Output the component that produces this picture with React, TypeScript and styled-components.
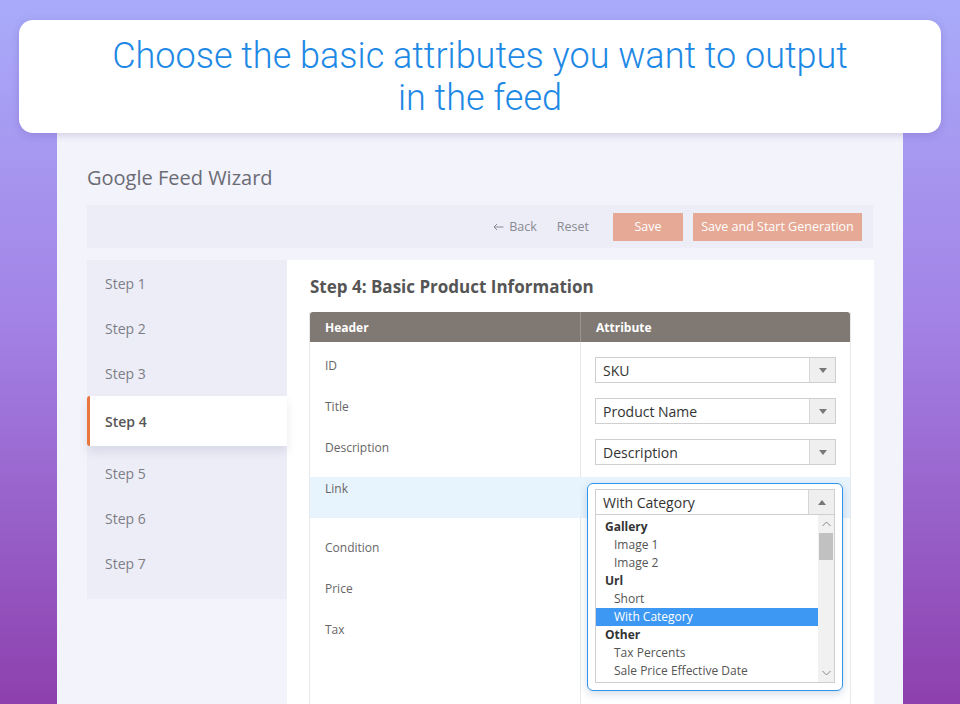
import React from 'react';
import styled, { createGlobalStyle } from 'styled-components';

const GlobalStyle = createGlobalStyle`
  html, body {
    margin: 0;
    padding: 0;
  }
  body {
    width: 960px;
    height: 704px;
    overflow: hidden;
    font-family: "Open Sans", "Noto Sans", sans-serif;
    background: linear-gradient(180deg, #a9abfa 0%, #a383e6 45%, #8d40ae 100%);
  }
`;

const Page = styled.div`
  position: relative;
  width: 960px;
  height: 704px;
  overflow: hidden;
`;

const Banner = styled.div`
  position: absolute;
  z-index: 2;
  left: 19px;
  top: 20px;
  width: 922px;
  height: 113px;
  box-sizing: border-box;
  padding-top: 15px;
  background: #fff;
  border-radius: 14px;
  box-shadow: 0 2px 8px rgba(60, 40, 120, 0.18);
  text-align: center;
  font-family: Roboto, "Liberation Sans", sans-serif;
  font-weight: 300;
  font-size: 36px;
  line-height: 42px;
  color: #1e88e5;
`;

const Panel = styled.div`
  margin: 133px 0 0 57px;
  width: 846px;
  height: 600px;
  box-sizing: border-box;
  padding: 30px 30px 0;
  background: #f2f3fb;
  display: flex;
  flex-direction: column;
`;

const Heading = styled.h1`
  margin: 0;
  font-size: 20px;
  font-weight: 400;
  color: #6b6b74;
  line-height: 30px;
`;

const Toolbar = styled.div`
  margin-top: 12px;
  height: 43px;
  background: #ecedf7;
  display: flex;
  align-items: center;
  justify-content: flex-end;
  padding-right: 11px;
`;

const LinkButton = styled.span<{ $gap?: number }>`
  font-size: 12.5px;
  color: #8a8a92;
  margin-right: ${p => p.$gap ?? 0}px;
  display: flex;
  align-items: center;
  gap: 5px;
`;

const SaveButton = styled.span<{ $wide?: boolean }>`
  height: 28px;
  box-sizing: border-box;
  width: ${p => (p.$wide ? '169px' : '70px')};
  justify-content: center;
  background: #e6a995;
  color: #fff;
  font-size: 12.5px;
  display: flex;
  align-items: center;
  margin-left: ${p => (p.$wide ? '10px' : '0')};
`;

const Body = styled.div`
  margin-top: 12px;
  display: flex;
  align-items: flex-start;
  flex: 1;
`;

const Sidebar = styled.ul`
  list-style: none;
  margin: 0;
  padding: 1px 0 13px;
  width: 200px;
  flex-shrink: 0;
  box-sizing: border-box;
  background: #ecedf6;
`;

const StepItem = styled.li<{ $active?: boolean }>`
  position: relative;
  height: ${p => (p.$active ? '50px' : '45px')};
  margin: ${p => (p.$active ? '0 0 5px' : '0')};
  display: flex;
  align-items: center;
  padding-left: 15px;
  font-size: 14px;
  color: ${p => (p.$active ? '#555' : '#7d7d86')};
  font-weight: ${p => (p.$active ? 600 : 400)};
  background: ${p => (p.$active ? '#fff' : 'transparent')};
  border-left: 3px solid ${p => (p.$active ? '#e8743e' : 'transparent')};
  border-radius: ${p => (p.$active ? '3px 0 0 3px' : '0')};
  box-shadow: ${p => (p.$active ? '0 6px 10px rgba(80, 80, 130, 0.12)' : 'none')};
  z-index: ${p => (p.$active ? 1 : 0)};
`;

const Content = styled.div`
  flex: 1;
  align-self: stretch;
  background: #fff;
  padding: 14px 23px 0;
`;

const Title = styled.h2`
  margin: 0 0 12px;
  font-size: 17px;
  font-weight: 700;
  color: #555;
  line-height: 26px;
`;

const Table = styled.div`
  position: relative;
  margin-left: -1px;
  width: 540px;
  height: 420px;
  border-left: 1px solid #e8e8e8;
  border-right: 1px solid #e8e8e8;
  display: grid;
  grid-template-columns: 270px 1fr;
  grid-auto-rows: min-content;
  background: linear-gradient(#e8e8e8, #e8e8e8) 270px 0 / 1px 100% no-repeat;
`;

const HeadCell = styled.div<{ $first?: boolean }>`
  height: 30px;
  background: #7f7873;
  color: #fff;
  font-size: 12px;
  font-weight: 700;
  display: flex;
  align-items: center;
  padding-left: 15px;
  border-left: ${p => (p.$first ? 'none' : '1px solid #9a938e')};
  border-radius: ${p => (p.$first ? '3px 0 0 0' : '0 3px 0 0')};
`;

const Row = styled.div<{ $highlight?: boolean; $top?: number; $bottom?: number }>`
  grid-column: 1 / 3;
  display: grid;
  grid-template-columns: 270px 1fr;
  height: 41px;
  margin-top: ${p => p.$top ?? 0}px;
  margin-bottom: ${p => p.$bottom ?? 0}px;
  background: ${p => (p.$highlight ? '#e8f4fd' : 'transparent')};
`;

const Label = styled.div`
  font-size: 12px;
  color: #666;
  padding: 3px 0 0 15px;
  line-height: 18px;
`;

const SelectCell = styled.div`
  padding: 3px 14px 0 15px;
  position: relative;
`;

const Select = styled.div`
  height: 26px;
  box-sizing: border-box;
  border: 1px solid #cfcfcf;
  background: #fff;
  display: flex;
  align-items: center;
  font-size: 14px;
  color: #333;
`;

const SelectText = styled.span`
  flex: 1;
  padding-left: 7px;
`;

const Arrow = styled.span`
  width: 25px;
  height: 24px;
  background: #efefef;
  border-left: 1px solid #d6d6d6;
  display: flex;
  align-items: center;
  justify-content: center;
`;

const Dropdown = styled.div`
  position: absolute;
  z-index: 3;
  left: 7px;
  top: 6px;
  width: 256px;
  height: 208px;
  box-sizing: border-box;
  padding: 5px 7px 7px;
  background: #fff;
  border: 1px solid #2f94ec;
  border-radius: 6px;
  box-shadow: 0 3px 8px rgba(40, 80, 140, 0.2);
`;

const OptionList = styled.div`
  height: 168px;
  box-sizing: border-box;
  border: 1px solid #cfcfcf;
  border-top: none;
  display: flex;
`;

const Options = styled.div`
  flex: 1;
  padding-top: 3px;
`;

const Option = styled.div<{ $group?: boolean; $selected?: boolean }>`
  height: 18px;
  line-height: 18px;
  font-size: 12px;
  padding-left: ${p => (p.$group ? '9px' : '18px')};
  font-weight: ${p => (p.$group ? 700 : 400)};
  color: ${p => (p.$selected ? '#fff' : p.$group ? '#333' : '#555')};
  background: ${p => (p.$selected ? '#3d98f4' : 'transparent')};
`;

const Scrollbar = styled.div`
  width: 16px;
  background: #f1f1f1;
  display: flex;
  flex-direction: column;
  align-items: center;
`;

const ScrollArrow = styled.div`
  height: 18px;
  display: flex;
  align-items: center;
  justify-content: center;
`;

const Thumb = styled.div`
  width: 14px;
  height: 27px;
  background: #c1c1c1;
  margin-bottom: auto;
`;

const Caret = ({ up }: { up?: boolean }) => (
  <svg width="8" height="5" viewBox="0 0 8 5">
    <path d={up ? 'M0 5 L4 0 L8 5 Z' : 'M0 0 L8 0 L4 5 Z'} fill="#777" />
  </svg>
);

const Chevron = ({ up }: { up?: boolean }) => (
  <svg width="9" height="6" viewBox="0 0 9 6">
    <path d={up ? 'M0.5 5 L4.5 1 L8.5 5' : 'M0.5 1 L4.5 5 L8.5 1'} fill="none" stroke="#888" strokeWidth="1" />
  </svg>
);

const steps = ['Step 1', 'Step 2', 'Step 3', 'Step 4', 'Step 5', 'Step 6', 'Step 7'];

const options = [
  { label: 'Gallery', group: true },
  { label: 'Image 1' },
  { label: 'Image 2' },
  { label: 'Url', group: true },
  { label: 'Short' },
  { label: 'With Category', selected: true },
  { label: 'Other', group: true },
  { label: 'Tax Percents' },
  { label: 'Sale Price Effective Date' },
];

const rows = [
  { label: 'ID', value: 'SKU', top: 12 },
  { label: 'Title', value: 'Product Name' },
  { label: 'Description', value: 'Description' },
  { label: 'Link', open: true, bottom: 18 },
  { label: 'Condition' },
  { label: 'Price' },
  { label: 'Tax' },
];

export default function App() {
  return (
    <Page>
      <GlobalStyle />
      <Banner>
        Choose the basic attributes you want to output
        <br />
        in the feed
      </Banner>
      <Panel>
        <Heading>Google Feed Wizard</Heading>
        <Toolbar>
          <LinkButton $gap={20}>
            <svg width="11" height="8" viewBox="0 0 11 8">
              <path d="M10.5 4 H1 M4 1 L1 4 L4 7" fill="none" stroke="#8a8a92" strokeWidth="1" />
            </svg>
            Back
          </LinkButton>
          <LinkButton $gap={24}>Reset</LinkButton>
          <SaveButton>Save</SaveButton>
          <SaveButton $wide>Save and Start Generation</SaveButton>
        </Toolbar>
        <Body>
          <Sidebar>
            {steps.map(s => (
              <StepItem key={s} $active={s === 'Step 4'}>
                {s}
              </StepItem>
            ))}
          </Sidebar>
          <Content>
            <Title>Step 4: Basic Product Information</Title>
            <Table>
              <HeadCell $first>Header</HeadCell>
              <HeadCell>Attribute</HeadCell>
              {rows.map(r => (
                <Row key={r.label} $highlight={r.open} $top={r.top} $bottom={r.bottom}>
                  <Label>{r.label}</Label>
                  <SelectCell>
                    {r.value && (
                      <Select>
                        <SelectText>{r.value}</SelectText>
                        <Arrow>
                          <Caret />
                        </Arrow>
                      </Select>
                    )}
                    {r.open && (
                      <Dropdown>
                        <Select>
                          <SelectText>With Category</SelectText>
                          <Arrow>
                            <Caret up />
                          </Arrow>
                        </Select>
                        <OptionList>
                          <Options>
                            {options.map(o => (
                              <Option key={o.label} $group={o.group} $selected={o.selected}>
                                {o.label}
                              </Option>
                            ))}
                          </Options>
                          <Scrollbar>
                            <ScrollArrow>
                              <Chevron up />
                            </ScrollArrow>
                            <Thumb />
                            <ScrollArrow>
                              <Chevron />
                            </ScrollArrow>
                          </Scrollbar>
                        </OptionList>
                      </Dropdown>
                    )}
                  </SelectCell>
                </Row>
              ))}
            </Table>
          </Content>
        </Body>
      </Panel>
    </Page>
  );
}
